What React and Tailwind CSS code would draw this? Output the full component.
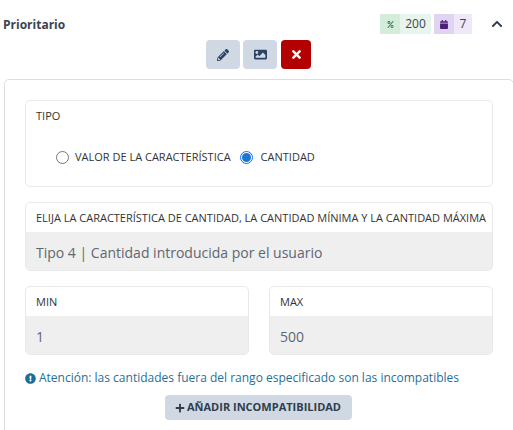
import { FaPencilAlt, FaImage, FaTimes, FaCalendar, FaPercent, FaChevronUp, FaExclamationCircle, FaPlus } from "react-icons/fa";

const LimitField = ({ label, value }) => (
  <div className="flex-1 h-[69px] flex flex-col border border-[#e9e9e9] rounded-[5px] overflow-hidden">
    <div className="h-[29px] px-[10px] pt-[1px] flex items-center text-[11px] text-[#333]">{label}</div>
    <div className="flex-1 bg-[#efefef] px-[10px] pt-[2px] flex items-center text-[14px] text-[#5f6670]">{value}</div>
  </div>
);

const App = () => {
  return (
    <div className="w-[513px] h-[430px] overflow-hidden bg-white pt-[14px] font-['Open_Sans',sans-serif]">
      {/* Header */}
      <div className="flex items-center h-[20px] pl-[3px]">
        <span className="pt-[1px] text-[12px] font-bold text-[#3a4450]">Prioritario</span>
        <div className="ml-auto flex items-center text-[12px] text-[#3a4450]">
          <div className="w-[20px] h-[20px] bg-[#d4edda] flex items-center justify-center">
            <FaPercent className="w-[7px] h-[7px] text-[#3f7a52]" />
          </div>
          <div className="w-[31px] h-[20px] bg-[#e8f5ec] flex items-center justify-center">200</div>
          <div className="ml-[3px] w-[20px] h-[20px] bg-[#e1d3f2] flex items-center justify-center">
            <FaCalendar className="w-[8px] h-[9px] text-[#4a1f78]" />
          </div>
          <div className="w-[18px] h-[20px] bg-[#efe8f8] flex items-center justify-center">7</div>
          <FaChevronUp className="ml-[19px] mr-[10px] w-[12px] h-[12px] text-[#2f3d4c]" />
        </div>
      </div>

      {/* Actions */}
      <div className="flex justify-center gap-[3px] mt-[6px] pl-[4px]">
        <button className="w-[34px] h-[29px] rounded-[4px] bg-[#d0d8e4] flex items-center justify-center">
          <FaPencilAlt className="w-[12px] h-[12px] text-[#2a4365]" />
        </button>
        <button className="w-[34px] h-[29px] rounded-[4px] bg-[#d0d8e4] flex items-center justify-center">
          <FaImage className="w-[13px] h-[13px] text-[#2a4365]" />
        </button>
        <button className="ml-[1px] w-[30px] h-[29px] rounded-[4px] bg-[#b30000] flex items-center justify-center">
          <FaTimes className="w-[13px] h-[13px] text-white" />
        </button>
      </div>

      {/* Card */}
      <div className="mt-[10px] ml-[4px] w-[510px] border border-[#dedede] rounded-[5px] px-[20px] pt-[20px] h-[400px]">
        <div className="h-[87px] border border-[#e9e9e9] rounded-[5px] px-[10px] pt-[7px]">
          <div className="text-[11px] text-[#333] leading-[16px]">TIPO</div>
          <div className="flex items-center mt-[25px] ml-[20px] text-[11px] text-[#333]">
            <span className="w-[13px] h-[13px] rounded-full border border-[#767676] bg-white" />
            <span className="ml-[6px]">VALOR DE LA CARACTERÍSTICA</span>
            <span className="ml-[9px] w-[13px] h-[13px] rounded-full border border-[#0075ff] bg-white flex items-center justify-center">
              <span className="w-[9px] h-[9px] rounded-full bg-[#1a76d2]" />
            </span>
            <span className="ml-[8px]">CANTIDAD</span>
          </div>
        </div>

        <div className="mt-[15px] h-[69px] flex flex-col border border-[#e9e9e9] rounded-[5px] overflow-hidden">
          <div className="h-[29px] px-[10px] pt-[1px] flex items-center text-[11px] text-[#333] whitespace-nowrap">
            ELIJA LA CARACTERÍSTICA DE CANTIDAD, LA CANTIDAD MÍNIMA Y LA CANTIDAD MÁXIMA
          </div>
          <div className="flex-1 bg-[#efefef] px-[10px] pt-[2px] flex items-center text-[14px] text-[#5f6670]">
            Tipo 4 | Cantidad introducida por el usuario
          </div>
        </div>

        <div className="mt-[15px] flex gap-[20px]">
          <LimitField label="MIN" value="1" />
          <LimitField label="MAX" value="500" />
        </div>

        <div className="mt-[14px] flex items-center text-[12px] text-[#1f6f96] whitespace-nowrap">
          <FaExclamationCircle className="w-[11px] h-[11px] text-[#1c6e98] mr-[3px]" />
          Atención: las cantidades fuera del rango especificado son las incompatibles
        </div>

        <div className="mt-[8px] flex justify-center pr-[2px]">
          <button className="w-[187px] h-[25px] rounded-[4px] bg-[#d0d8e4] flex items-center justify-center text-[11px] font-bold text-[#2f3d4c]">
            <FaPlus className="w-[10px] h-[10px] mr-[2px]" />
            AÑADIR INCOMPATIBILIDAD
          </button>
        </div>
      </div>
    </div>
  );
};

export default App;
